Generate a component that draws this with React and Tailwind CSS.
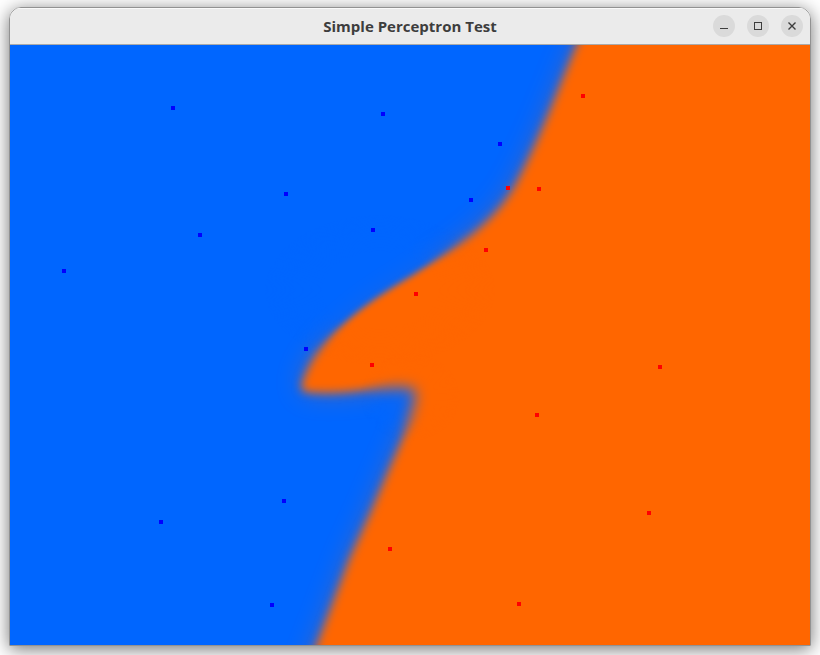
import React from "react";

const BLUE_POINTS = [
  [163, 63], [373, 69], [490, 99], [276, 149], [461, 155], [363, 185], [190, 190],
  [54, 226], [296, 304], [274, 456], [151, 477], [262, 560],
];

const RED_POINTS = [
  [573, 51], [498, 143], [529, 144], [476, 205], [406, 249], [362, 320],
  [650, 322], [527, 370], [639, 468], [380, 504], [509, 559],
];

const REGION =
  "M594 -60 L567 0 C548 44 534 86 505 141 C494 159 485 169 471 182 C453 198 434 210 403 230 C380 244 357 258 337 276 C318 292 303 312 297 326 C292 336 288 347 297 347 C316 349 340 347 360 344 C376 342 394 341 402 343 C409 346 405 356 402 366 C397 386 390 400 379 425 L361 467 L340 513 L307 600 L283 660 L900 660 L900 -60 Z";

function Points({ points, color }) {
  return points.map(([x, y]) => (
    <rect key={`${x}-${y}`} x={x - 2} y={y - 2} width="4" height="4" fill={color} shapeRendering="crispEdges" />
  ));
}

function BlurFilter({ id, amount }) {
  return (
    <filter id={id} filterUnits="userSpaceOnUse" x="-60" y="-60" width="960" height="720" colorInterpolationFilters="sRGB">
      <feGaussianBlur stdDeviation={amount} />
    </filter>
  );
}

function DecisionMap() {
  return (
    <svg viewBox="0 0 800 600" className="block w-full bg-[#0066ff]" role="img" aria-label="Decision regions">
      <defs>
        <BlurFilter id="crisp" amount="3" />
        <BlurFilter id="soft" amount="5" />
        <BlurFilter id="hazy" amount="7" />
        <BlurFilter id="wide" amount="14" />
        <radialGradient id="fade">
          <stop offset="0.5" stopColor="#fff" />
          <stop offset="1" stopColor="#000" />
        </radialGradient>
        <mask id="steep" maskUnits="userSpaceOnUse" x="0" y="0" width="800" height="600">
          <ellipse cx="370" cy="245" rx="115" ry="75" fill="url(#fade)" />
        </mask>
        <mask id="gentle" maskUnits="userSpaceOnUse" x="0" y="0" width="800" height="600">
          <ellipse cx="400" cy="352" rx="50" ry="44" fill="url(#fade)" />
        </mask>
      </defs>
      <path d={REGION} fill="#ff6600" filter="url(#wide)" opacity="0.35" />
      <path d={REGION} fill="#ff6600" filter="url(#soft)" />
      <g mask="url(#steep)">
        <rect width="800" height="600" fill="#0066ff" />
        <path d={REGION} fill="#ff6600" filter="url(#wide)" opacity="0.12" />
        <path d={REGION} fill="#ff6600" filter="url(#crisp)" />
      </g>
      <g mask="url(#gentle)">
        <rect width="800" height="600" fill="#0066ff" />
        <path d={REGION} fill="#ff6600" filter="url(#wide)" opacity="0.2" />
        <path d={REGION} fill="#ff6600" filter="url(#hazy)" />
      </g>
      <Points points={BLUE_POINTS} color="#0000ff" />
      <Points points={RED_POINTS} color="#ff0000" />
    </svg>
  );
}

function WindowButton({ label, children }) {
  return (
    <button type="button" aria-label={label} className="size-[22px] rounded-full bg-[#dadada] text-[#3d3d3d]">
      <svg viewBox="0 0 22 22" className="block size-full" fill="none" stroke="currentColor">
        {children}
      </svg>
    </button>
  );
}

export default function App() {
  return (
    <main className="min-h-screen overflow-hidden bg-white px-[9px] pt-[7px] pb-2 font-['Open_Sans','Noto_Sans',sans-serif]">
      <section className="overflow-hidden rounded-t-xl border border-[#929292] shadow-[0_3px_18px_rgba(0,0,0,0.55)]">
        <header className="grid h-[37px] grid-cols-[1fr_auto_1fr] items-center border-t border-b border-t-[#f9f9f9] border-b-[#aaaaaa] bg-[#ebebeb] px-[7px] pb-0.5">
          <h1 className="col-start-2 text-[15px] leading-5 font-bold text-[#3d3d3d]">Simple Perceptron Test</h1>
          <div className="flex justify-end gap-3">
            <WindowButton label="Minimize">
              <path d="M7 13.5h8" />
            </WindowButton>
            <WindowButton label="Maximize">
              <rect x="7.5" y="7.5" width="7" height="7" />
            </WindowButton>
            <WindowButton label="Close">
              <path d="M7.5 7.5l7 7M14.5 7.5l-7 7" strokeWidth="1.4" />
            </WindowButton>
          </div>
        </header>
        <DecisionMap />
      </section>
    </main>
  );
}
